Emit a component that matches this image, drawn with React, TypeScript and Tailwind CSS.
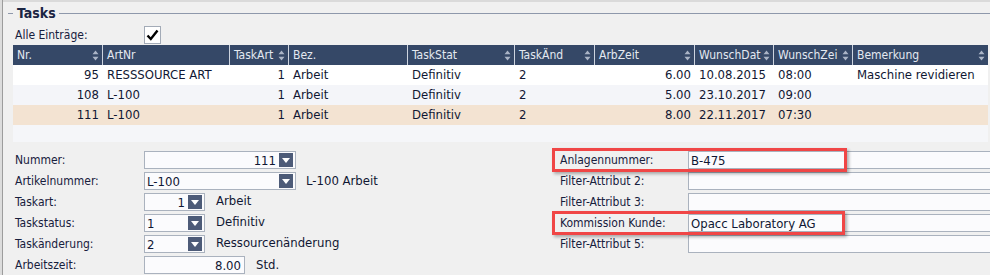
import React from 'react'

const COLUMNS = [
  { label: 'Nr.', w: 'w-[89px]', sort: true, right: true },
  { label: 'ArtNr', w: 'w-[127px]', sort: false, right: false },
  { label: 'TaskArt', w: 'w-[59px]', sort: true, right: true },
  { label: 'Bez.', w: 'w-[119px]', sort: false, right: false },
  { label: 'TaskStat', w: 'w-[107px]', sort: true, right: false },
  { label: 'TaskÄnd', w: 'w-[80px]', sort: true, right: false },
  { label: 'ArbZeit', w: 'w-[100px]', sort: true, right: true },
  { label: 'WunschDat', w: 'w-[79px]', sort: true, right: false },
  { label: 'WunschZei', w: 'w-[79px]', sort: true, right: false },
  { label: 'Bemerkung', w: 'w-[136px]', sort: true, right: false },
]

const ROWS = [
  { bg: 'bg-white', cells: ['95', 'RESSSOURCE ART', '1', 'Arbeit', 'Definitiv', '2', '6.00', '10.08.2015', '08:00', 'Maschine revidieren'] },
  { bg: 'bg-[#f4f5f9]', cells: ['108', 'L-100', '1', 'Arbeit', 'Definitiv', '2', '5.00', '23.10.2017', '09:00', ''] },
  { bg: 'bg-[#f3e3d2]', cells: ['111', 'L-100', '1', 'Arbeit', 'Definitiv', '2', '8.00', '22.11.2017', '07:30', ''] },
]

function SortIcon() {
  return (
    <svg width="7" height="11" viewBox="0 0 7 11" className="shrink-0">
      <path d="M3.5 0.5 L6.5 4.2 H0.5Z M3.5 10.5 L6.5 6.8 H0.5Z" fill="#aab4c6" />
    </svg>
  )
}

function DropButton() {
  return (
    <span className="w-[14px] h-[14px] mr-[2px] shrink-0 bg-[#4d5b78] flex items-center justify-center">
      <svg width="8" height="5" viewBox="0 0 8 5">
        <path d="M0 0 H8 L4 5Z" fill="#ffffff" />
      </svg>
    </span>
  )
}

function Field({
  w,
  value,
  right,
  drop,
}: {
  w: string
  value?: string
  right?: boolean
  drop?: boolean
}) {
  return (
    <div
      className={`${w} h-[18px] shrink-0 flex items-center border border-[#aab2be] bg-[#fbfbfd] text-[13px] text-[#101733]`}
    >
      <span className={`flex-1 leading-none ${right ? 'text-right pr-[3px]' : 'pl-[2px]'}`}>{value}</span>
      {drop && <DropButton />}
    </div>
  )
}

function Label({ children, w }: { children: React.ReactNode; w: string }) {
  return <span className={`${w} shrink-0 text-[12px] text-[#17203d]`}>{children}</span>
}

export default function App() {
  return (
    <div className="relative w-[990px] h-[275px] overflow-hidden flex bg-[#f0f0f0] font-['DejaVu_Sans_Condensed','DejaVu_Sans',sans-serif] font-stretch-condensed">
      <div className="w-[3px] shrink-0 bg-[#dcdcdc] border-r border-[#9c9c9c]" />

      <div className="flex-1 flex flex-col">
        <div className="h-[2px] bg-[#dadada]" />

        {/* fieldset legend */}
        <div className="h-[22px] flex items-center pl-[5px]">
          <div className="w-[5px] h-px bg-[#8e98ab]" />
          <span className="ml-[4px] mr-[3px] text-[14px] font-bold text-[#1b2543] leading-none">Tasks</span>
          <div className="flex-1 h-px bg-[#8e98ab]" />
        </div>

        <div className="h-[21px] flex items-center pl-[12px]">
          <Label w="w-[129px]">Alle Einträge:</Label>
          <span className="w-[17px] h-[18px] bg-white border border-[#a3abb7] flex items-center justify-center">
            <svg width="13" height="12" viewBox="0 0 13 12">
              <path d="M1.5 6.5 L4.8 10 L11.5 1.5" fill="none" stroke="#000" strokeWidth="2.4" />
            </svg>
          </span>
        </div>

        {/* grid */}
        <div className="ml-[10px] w-[975px] bg-[#f5f6f9]">
          <div className="flex h-[20px] bg-[#354867]">
            {COLUMNS.map((c, i) => (
              <div
                key={c.label}
                className={`${c.w} shrink-0 flex items-center justify-between gap-[1px] pl-[4px] pr-[3px] text-[12px] text-[#e4e9f1] whitespace-nowrap ${i > 0 ? 'border-l border-[#cdd4df]' : ''}`}
              >
                <span>{c.label}</span>
                {c.sort && <SortIcon />}
              </div>
            ))}
          </div>
          {ROWS.map((r, ri) => (
            <div key={ri} className={`flex h-[20px] items-center ${r.bg}`}>
              {COLUMNS.map((c, ci) => (
                <div
                  key={c.label}
                  className={`${c.w} shrink-0 text-[13px] text-[#101733] whitespace-nowrap overflow-hidden ${c.right ? 'text-right pr-[3px]' : 'pl-[5px]'}`}
                >
                  {r.cells[ci]}
                </div>
              ))}
            </div>
          ))}
          <div className="h-[17px]" />
        </div>

        {/* detail form */}
        <div className="mt-[9px] flex pl-[12px]">
          <div className="w-[545px] shrink-0 flex flex-col gap-[3px]">
            <div className="flex items-center h-[18px]">
              <Label w="w-[129px]">Nummer:</Label>
              <Field w="w-[152px]" value="111" right drop />
            </div>
            <div className="flex items-center h-[18px]">
              <Label w="w-[129px]">Artikelnummer:</Label>
              <Field w="w-[152px]" value="L-100" drop />
              <span className="ml-[10px] text-[13px] text-[#101733]">L-100 Arbeit</span>
            </div>
            <div className="flex items-center h-[18px]">
              <Label w="w-[129px]">Taskart:</Label>
              <Field w="w-[61px]" value="1" right drop />
              <span className="ml-[11px] -mt-[2px] text-[13px] text-[#101733]">Arbeit</span>
            </div>
            <div className="flex items-center h-[18px]">
              <Label w="w-[129px]">Taskstatus:</Label>
              <Field w="w-[61px]" value="1" drop />
              <span className="ml-[11px] -mt-[2px] text-[13px] text-[#101733]">Definitiv</span>
            </div>
            <div className="flex items-center h-[18px]">
              <Label w="w-[129px]">Taskänderung:</Label>
              <Field w="w-[61px]" value="2" drop />
              <span className="ml-[11px] -mt-[2px] text-[13px] text-[#101733]">Ressourcenänderung</span>
            </div>
            <div className="flex items-center h-[18px]">
              <Label w="w-[129px]">Arbeitszeit:</Label>
              <Field w="w-[101px]" value="8.00" right />
              <span className="ml-[11px] text-[13px] text-[#101733]">Std.</span>
            </div>
          </div>

          <div className="flex flex-col gap-[3px]">
            {[
              ['Anlagennummer:', 'B-475'],
              ['Filter-Attribut 2:', ''],
              ['Filter-Attribut 3:', ''],
              ['Kommission Kunde:', 'Opacc Laboratory AG'],
              ['Filter-Attribut 5:', ''],
            ].map(([l, v]) => (
              <div key={l} className="flex items-center h-[18px]">
                <Label w="w-[128px]">{l}</Label>
                <Field w="w-[320px]" value={v} />
              </div>
            ))}
          </div>
        </div>
      </div>

      {/* annotation boxes */}
      <div className="absolute left-[552px] top-[148px] w-[295px] h-[24px] border-[3px] border-[#f04646] shadow-[2px_2px_3px_rgba(0,0,0,0.3)]" />
      <div className="absolute left-[552px] top-[211px] w-[293px] h-[24px] border-[3px] border-[#f04646] shadow-[2px_2px_3px_rgba(0,0,0,0.3)]" />
    </div>
  )
}
